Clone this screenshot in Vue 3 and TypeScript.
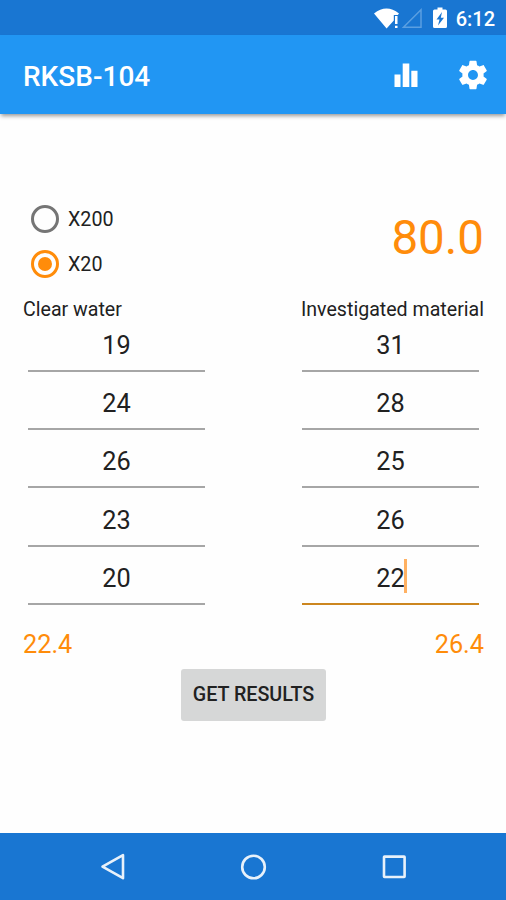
<script setup lang="ts">
import { computed, ref } from 'vue'

type Scale = 'X200' | 'X20'

const scales: Scale[] = ['X200', 'X20']
const selected = ref<Scale>('X20')
const water = ref<number[]>([19, 24, 26, 23, 20])
const material = ref<number[]>([31, 28, 25, 26, 22])
const result = ref('80.0')
const focusedRow = 4

const mean = (values: number[]): string =>
  (values.reduce((sum, v) => sum + v, 0) / values.length).toFixed(1)

const waterMean = computed(() => mean(water.value))
const materialMean = computed(() => mean(material.value))
</script>

<template>
  <div class="screen">
    <header class="status">
      <svg class="signals" width="76" height="35" viewBox="0 0 76 35">
        <path fill="#fff" d="M2 13.500Q14.500 3.500 27 13.500L25.800 15H21.800V20.500L14.600 28.500Z" />
        <path fill="#fff" d="M23 16h2.500v8H23zM23 25.700h2.500V28H23z" />
        <path fill="none" stroke="#5b9fe1" stroke-width="1.500" d="M31.500 27.200H49V9.800Z" />
        <path fill="#fff" fill-rule="evenodd" d="M65.500 7.500h5v2h3q1.500 0 1.500 1.500v15.500q0 1.500-1.500 1.500h-11q-1.500 0-1.500-1.500V11q0-1.500 1.500-1.500h3zM70 12l-5.500 7.500h3L66 25.500l6-7.800h-3.200z" />
      </svg>
      <span class="clock">6:12</span>
    </header>

    <div class="toolbar">
      <h1 class="title">RKSB-104</h1>
      <button class="action" aria-label="Statistics">
        <svg width="34" height="34" viewBox="0 0 34 34">
          <path fill="#fff" d="M5.500 16.500h6V29h-6zM13.700 5.500h6.600V29h-6.600zM22.300 12.700h6.200V29h-6.200z" />
        </svg>
      </button>
      <button class="action gear" aria-label="Settings">
        <svg width="34" height="34" viewBox="0 0 24 24">
          <path fill="#fff" d="M19.430 12.980c.04-.32.07-.64.07-.98s-.03-.66-.07-.98l2.110-1.650c.19-.15.24-.42.12-.64l-2-3.460c-.12-.22-.39-.3-.61-.22l-2.490 1c-.52-.4-1.080-.73-1.690-.98l-.38-2.650C14.460 2.180 14.250 2 14 2h-4c-.25 0-.46.18-.49.42l-.38 2.650c-.61.25-1.170.59-1.690.98l-2.490-1c-.23-.09-.49 0-.61.22l-2 3.460c-.13.22-.07.49.12.64l2.110 1.650c-.04.32-.07.65-.07.98s.03.66.07.98l-2.110 1.650c-.19.15-.24.42-.12.64l2 3.460c.12.22.39.3.61.22l2.490-1c.52.4 1.080.73 1.690.98l.38 2.650c.03.24.24.42.49.42h4c.25 0 .46-.18.49-.42l.38-2.650c.61-.25 1.170-.59 1.690-.98l2.490 1c.23.09.49 0 .61-.22l2-3.460c.12-.22.07-.49-.12-.64l-2.110-1.650zM12 15.500c-1.930 0-3.500-1.570-3.500-3.500s1.570-3.500 3.500-3.500 3.500 1.570 3.500 3.500-1.570 3.500-3.500 3.500z" />
        </svg>
      </button>
    </div>

    <main class="content">
      <section class="top">
        <div class="radios">
          <div
            v-for="s in scales"
            :key="s"
            class="radio"
            :class="{ on: s === selected }"
            @click="selected = s"
          >
            <span class="ring"><span class="dot"></span></span>
            <span class="radio-label">{{ s }}</span>
          </div>
        </div>
        <div class="result">{{ result }}</div>
      </section>

      <section class="columns">
        <div class="column">
          <div class="heading">Clear water</div>
          <div v-for="(v, i) in water" :key="i" class="field">{{ v }}</div>
          <div class="mean">{{ waterMean }}</div>
        </div>
        <div class="column right">
          <div class="heading">Investigated material</div>
          <div
            v-for="(v, i) in material"
            :key="i"
            class="field"
            :class="{ focused: i === focusedRow }"
          >
            <span class="value">{{ v }}<span v-if="i === focusedRow" class="caret"></span></span>
          </div>
          <div class="mean">{{ materialMean }}</div>
        </div>
      </section>

      <button class="submit">GET RESULTS</button>
    </main>

    <nav class="navbar">
      <svg width="34" height="34" viewBox="0 0 34 34">
        <path d="M27 5.200V28.200L6.500 16.700Z" />
      </svg>
      <svg width="34" height="34" viewBox="0 0 34 34">
        <circle cx="17.500" cy="17" r="11.300" />
      </svg>
      <svg width="34" height="34" viewBox="0 0 34 34">
        <rect x="7" y="6.600" width="20.600" height="20.400" rx="0.500" />
      </svg>
    </nav>
  </div>
</template>

<style>
body {
  margin: 0;
  background: #fff;
}
</style>

<style scoped>
.screen {
  width: 506px;
  height: 900px;
  display: flex;
  flex-direction: column;
  overflow: hidden;
  background: #fefefe;
  color: #212121;
  font-family: Roboto, 'Liberation Sans', sans-serif;
}
button {
  border: 0;
  padding: 0;
  background: none;
  font-family: inherit;
}
svg {
  display: block;
}
.status {
  height: 35px;
  flex: none;
  display: flex;
  align-items: center;
  justify-content: flex-end;
  padding-right: 11px;
  background: #1976d2;
  color: #fff;
}
.signals {
  margin-right: 8px;
}
.clock {
  font-size: 20px;
  font-weight: 500;
  line-height: 24px;
  padding-top: 3px;
}
.toolbar {
  height: 79px;
  flex: none;
  display: flex;
  align-items: center;
  box-sizing: border-box;
  padding: 0 16px 0 23px;
  background: #2196f3;
  box-shadow: 0 3px 4px -1px rgba(0, 0, 0, 0.4);
}
.title {
  flex: 1;
  margin: 0;
  padding-top: 5px;
  color: #fff;
  font-size: 28px;
  font-weight: 500;
  line-height: 34px;
}
.gear {
  margin-left: 33px;
  padding-top: 1px;
}
.content {
  flex: 1;
  display: flex;
  flex-direction: column;
  padding: 82px 22px 0 23px;
}
.top {
  display: flex;
  justify-content: space-between;
  height: 101px;
}
.radios {
  padding-left: 8px;
}
.radio {
  display: flex;
  align-items: center;
  height: 45px;
}
.ring {
  width: 28px;
  height: 28px;
  box-sizing: border-box;
  border: 3px solid #757575;
  border-radius: 50%;
  display: flex;
  align-items: center;
  justify-content: center;
}
.dot {
  width: 14px;
  height: 14px;
  border-radius: 50%;
}
.on .ring {
  border-color: #ff8c0a;
}
.on .dot {
  background: #ff8c0a;
}
.radio-label {
  margin-left: 9px;
  padding-top: 2px;
  font-size: 19.700px;
  line-height: 24px;
}
.result {
  padding-top: 13px;
  font-size: 47.500px;
  line-height: 58px;
  color: #ff8c0a;
}
.columns {
  display: flex;
  justify-content: space-between;
}
.column {
  width: 187px;
}
.heading {
  height: 24px;
  font-size: 19.600px;
  line-height: 26px;
  white-space: nowrap;
}
.right .heading {
  text-align: right;
}
.field {
  height: 58.200px;
  box-sizing: border-box;
  margin: 0 5px;
  padding-top: 10px;
  text-align: center;
  font-size: 25.300px;
  line-height: 30px;
  background: linear-gradient(#a6a6a6, #a6a6a6) 0 49px / 100% 2px no-repeat;
}
.focused {
  background-image: linear-gradient(#cc861f, #cc861f);
}
.value {
  position: relative;
}
.caret {
  position: absolute;
  right: -2px;
  top: -5px;
  width: 3px;
  height: 34px;
  background: #ffb162;
}
.mean {
  margin-top: 18px;
  font-size: 25.300px;
  line-height: 30px;
  color: #ff8c0a;
}
.right .mean {
  text-align: right;
}
.submit {
  align-self: center;
  width: 145px;
  height: 52px;
  margin-top: 9px;
  border-radius: 3px;
  background: #d6d7d7;
  color: #212121;
  font-size: 19.700px;
  font-weight: 500;
}
.navbar {
  height: 67px;
  flex: none;
  display: flex;
  align-items: center;
  justify-content: center;
  gap: 106.500px;
  background: #1976d2;
}
.navbar svg {
  fill: none;
  stroke: #e8f1fa;
  stroke-width: 2.600;
  stroke-linejoin: round;
}
</style>
